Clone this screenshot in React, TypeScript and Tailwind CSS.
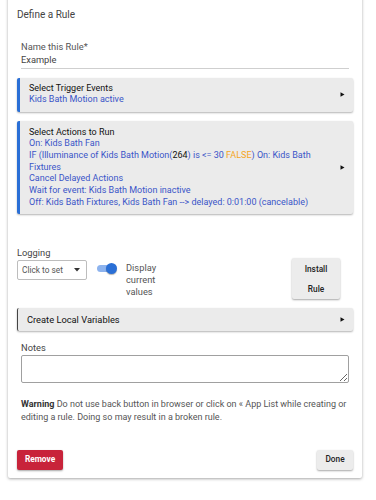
const Arrow = () => (
  <svg width="5" height="5" viewBox="0 0 5 5" className="shrink-0">
    <polygon points="0.5,0.3 4.5,2.5 0.5,4.7" fill="#111" />
  </svg>
);

const App = () => {
  return (
    <div className="w-[376px] h-[500px] bg-white font-['Roboto',sans-serif] text-[9px] leading-[11.7px] overflow-hidden">
      <div className="ml-[8px] w-[354px] -mt-[6px] pt-[15px] pb-[8px] px-[9px] bg-white shadow-[0_1px_3px_rgba(0,0,0,0.35)] rounded-b-[2px]">
        <div className="text-[#444] text-[10px] leading-[12px]">Define a Rule</div>

        <div className="mt-[20px] mx-[4px] text-[9.3px]">
          <div className="text-[#555] leading-[12.5px]">Name this Rule*</div>
          <div className="text-[#444] leading-[12.5px] pb-[1.5px] border-b border-[#cfcfcf]">Example</div>
        </div>

        <div className="mt-[9px] flex items-center bg-[#ebebeb] border-l-[3px] border-[#2a6fd6] pl-[9px] pr-[8px] pt-[5px] pb-[6px] shadow-[0_1px_2px_rgba(0,0,0,0.3)] rounded-[2px]">
          <div className="flex-1 leading-[11.5px]">
            <div className="text-[#111]">Select Trigger Events</div>
            <div className="text-[#3a55c8]">Kids Bath Motion active</div>
          </div>
          <Arrow />
        </div>

        <div className="mt-[9px] flex items-center bg-[#ebebeb] border-l-[3px] border-[#2a6fd6] pl-[9px] pr-[8px] py-[6px] shadow-[0_1px_2px_rgba(0,0,0,0.3)] rounded-[2px]">
          <div className="w-[292px] text-[#3a55c8]">
            <div className="text-[#111]">Select Actions to Run</div>
            <div>On: Kids Bath Fan</div>
            <div>
              IF (Illuminance of Kids Bath Motion(<span className="text-[#111]">264</span>) is &lt;= 30{" "}
              <span className="text-[#f5a623]">FALSE</span>) On: Kids Bath Fixtures
            </div>
            <div>Cancel Delayed Actions</div>
            <div>Wait for event: Kids Bath Motion inactive</div>
            <div className="whitespace-nowrap">Off: Kids Bath Fixtures, Kids Bath Fan --&gt; delayed: 0:01:00 (cancelable)</div>
          </div>
          <div className="ml-auto">
            <Arrow />
          </div>
        </div>

        <div className="mt-[33px] flex items-start">
          <div>
            <div className="text-[#444] leading-[12px] text-[9.3px]">Logging</div>
            <div className="mt-[1px] w-[70px] h-[20px] border border-[#bdbdbd] rounded-[2px] flex items-center pl-[4px] pr-[6px] text-[#555] text-[8.3px]">
              <span className="flex-1">Click to set</span>
              <svg width="6" height="4" viewBox="0 0 6 4">
                <polygon points="0,0 6,0 3,3.5" fill="#333" />
              </svg>
            </div>
          </div>

          <div className="ml-[10px] mt-[16px] relative w-[20px] h-[11px]">
            <div className="absolute left-0 top-[2px] w-[16px] h-[7px] rounded-full bg-[#8db3ee]" />
            <div className="absolute right-0 top-0 w-[11px] h-[11px] rounded-full bg-[#2a6fd6] shadow-[0_1px_1px_rgba(0,0,0,0.3)]" />
          </div>

          <div className="ml-[9px] mt-[15px] text-[#555] leading-[12px] text-[9.3px]">
            <div>Display</div>
            <div>current</div>
            <div>values</div>
          </div>

          <div className="ml-auto mr-[13px] mt-[11px] w-[48px] h-[41px] bg-[#ececec] shadow-[0_1px_2px_rgba(0,0,0,0.35)] rounded-[2px] flex flex-col items-center justify-center gap-[8px] text-[#222] font-medium text-[8.3px] leading-[12px]">
            <div>Install</div>
            <div>Rule</div>
          </div>
        </div>

        <div className="mt-[9px] h-[23px] flex items-center bg-[#ebebeb] border-l-[1.5px] border-[#444] pl-[9px] pr-[8px] shadow-[0_1px_2px_rgba(0,0,0,0.3)] rounded-[2px] text-[#111] text-[9.3px]">
          <span className="flex-1">Create Local Variables</span>
          <Arrow />
        </div>

        <div className="mt-[11px] mx-[4px]">
          <div className="text-[#444] leading-[12px] text-[9.3px]">Notes</div>
          <textarea className="mt-[1px] block w-full h-[28px] border border-[#a0a0a0] rounded-[2px] outline-none" />
        </div>

        <div className="mt-[15px] mx-[4px] text-[#555] leading-[12.6px]">
          <span className="font-bold text-[#333]">Warning</span> Do not use back button in browser or click on « App List while creating or editing a rule. Doing so may result in a broken rule.
        </div>

        <div className="mt-[26px] flex justify-between">
          <div className="w-[46px] h-[20px] bg-[#c8233a] text-white font-bold text-[8.3px] flex items-center justify-center rounded-[2px] shadow-[0_1px_2px_rgba(0,0,0,0.35)]">
            Remove
          </div>
          <div className="w-[36px] h-[20px] bg-[#ececec] text-[#222] font-medium text-[8.3px] flex items-center justify-center rounded-[2px] shadow-[0_1px_2px_rgba(0,0,0,0.35)]">
            Done
          </div>
        </div>
      </div>
    </div>
  );
};

export default App;
